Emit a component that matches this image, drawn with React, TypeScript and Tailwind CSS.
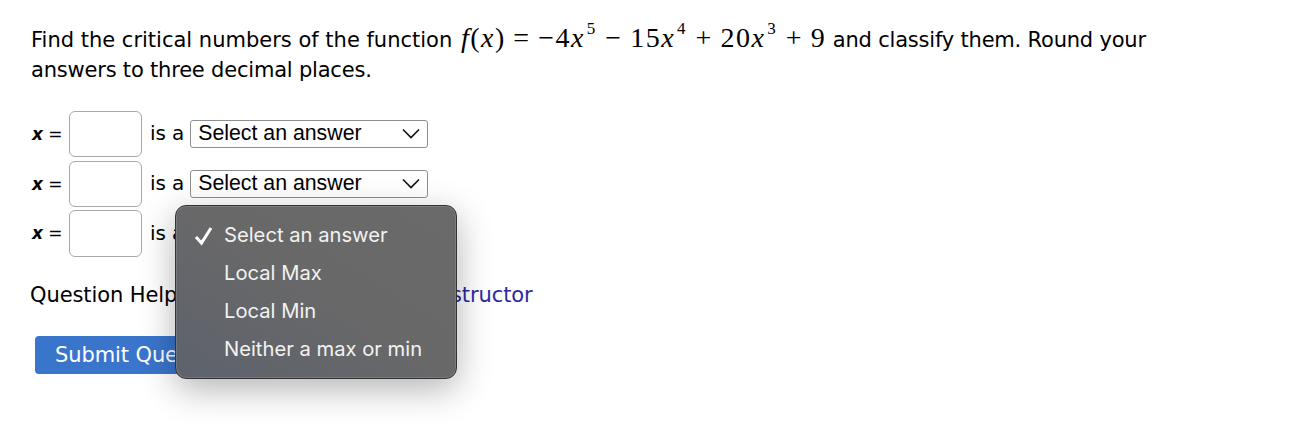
const sans = "font-['DejaVu_Sans',sans-serif]";

function Sup({ children }: { children: string }) {
  return <sup className="relative top-[-3px] ml-[2px] mr-[1px] align-super text-[17px] leading-none not-italic">{children}</sup>;
}

function Op({ children }: { children: string }) {
  return <span className="mx-[7.5px]">{children}</span>;
}

function Row({ mt, h }: { mt: string; h: string }) {
  return (
    <div className={`flex items-center ${mt}`}>
      <span className="w-[38px] pl-[1px] text-[17px] text-black"><i className="font-semibold">x</i> =</span>
      <div className={`${h} w-[73px] rounded-[6px] border border-[#a9a9a9] bg-white`} />
      <span className="ml-[8px] -mt-[2px] text-[20px] tracking-[-0.1px] text-black">is a</span>
      <div className="ml-[6px] -mt-[1px] flex h-[28px] w-[238px] items-center justify-between rounded-[3px] border border-[#8e8e8e] bg-white pl-[7px] pr-[6px] font-['Liberation_Sans',sans-serif] text-[21.3px] text-black">
        <span>Select an answer</span>
        <svg width="20" height="11" viewBox="0 0 20 11" fill="none" stroke="#111" strokeWidth="1.6"><path d="M2 1.5 10 9.5 18 1.5" /></svg>
      </div>
    </div>
  );
}

export default function App() {
  return (
    <div className={`relative h-[430px] w-[1314px] overflow-hidden bg-white ${sans}`}>
      <div className="pl-[31px] pt-[23px]">
        <p className="w-[1200px] text-[21px] leading-[30px] text-black">
          Find the critical numbers of the function{" "}
          <span className="ml-[2px] font-['Liberation_Serif',serif] text-[28px] tracking-[1.5px]">
            <i>f</i>(<i>x</i>)<Op>=</Op>−4<i>x</i><Sup>5</Sup><Op>−</Op>15<i>x</i><Sup>4</Sup><Op>+</Op>20<i>x</i><Sup>3</Sup><Op>+</Op>9
          </span>{" "}
          <span className="tracking-[-0.2px]">and classify them. Round your<br />answers to three decimal places.</span>
        </p>
        <div className="mt-[26px]">
          <Row mt="" h="h-[46px]" />
          <Row mt="mt-[4px]" h="h-[46px]" />
          <Row mt="mt-[3px]" h="h-[47px]" />
        </div>
        <p className="mt-[23px] flex text-[21px] leading-[30px] tracking-[-0.1px] text-black">
          <span className="-ml-[1px]">Question Help:</span>
          <span className="ml-[150px] text-[#2a2a9f]">Message instructor</span>
        </p>
        <button className="ml-[4px] mt-[26px] flex h-[38px] w-[200px] items-center rounded-[4px] bg-[#3a75cc] pl-[20px] pt-[1px] text-[21px] tracking-[-0.1px] text-white">
          Submit Question
        </button>
      </div>
      <div className="absolute left-[175px] top-[205px] h-[174px] w-[282px] rounded-[11px] border border-[#333333] bg-gradient-to-tr from-[#5d626c] via-[#686869] to-[#6a6a6a] pt-[10px] font-['Inter',sans-serif] text-[20.2px] leading-[38px] text-[#f2f2f2] shadow-[inset_0_0_0_1px_rgba(255,255,255,0.13),0_10px_35px_rgba(0,0,0,0.3)]">
        <div className="relative pl-[48px]">
          <svg className="absolute left-[18px] top-[10px]" width="20" height="20" viewBox="0 0 20 20" fill="none" stroke="#fff" strokeWidth="3"><path d="M2 11 7.5 17 17 2" /></svg>
          Select an answer
        </div>
        <div className="pl-[48px]">Local Max</div>
        <div className="pl-[48px]">Local Min</div>
        <div className="pl-[48px]">Neither a max or min</div>
      </div>
    </div>
  );
}
